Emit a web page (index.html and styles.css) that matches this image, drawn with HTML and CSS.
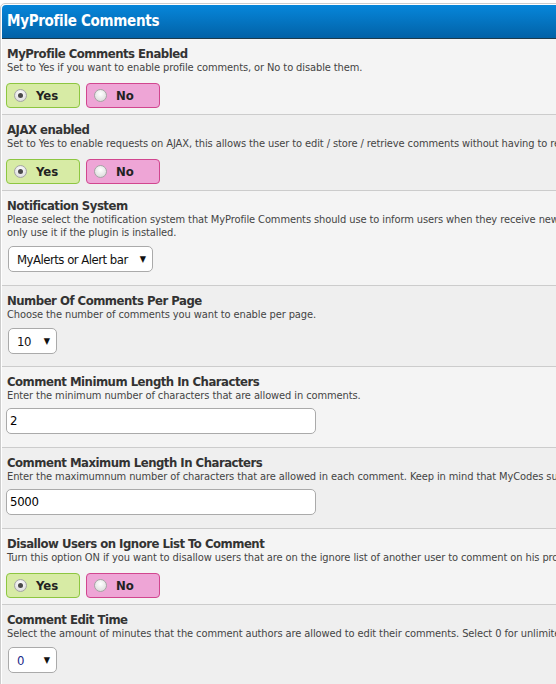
FILE: index.html
```html
<!DOCTYPE html>
<html>
<head>
<meta charset="utf-8">
<link rel="stylesheet" href="styles.css">
</head>
<body>
<div class="wrapper">
  <div class="title">MyProfile Comments</div>

  <div class="row alt1">
    <div class="label">MyProfile Comments Enabled</div>
    <div class="desc">Set to Yes if you want to enable profile comments, or No to disable them.</div>
    <div class="yesno">
      <span class="opt yes"><span class="radio checked"></span>Yes</span>
      <span class="opt no"><span class="radio"></span>No</span>
    </div>
  </div>

  <div class="row alt2">
    <div class="label">AJAX enabled</div>
    <div class="desc">Set to Yes to enable requests on AJAX, this allows the user to edit / store / retrieve comments without having to reload the page.</div>
    <div class="yesno">
      <span class="opt yes"><span class="radio checked"></span>Yes</span>
      <span class="opt no"><span class="radio"></span>No</span>
    </div>
  </div>

  <div class="row alt1 tall">
    <div class="label">Notification System</div>
    <div class="desc">Please select the notification system that MyProfile Comments should use to inform users when they receive new comments. MyAlerts<br>only use it if the plugin is installed.</div>
    <div class="select wide"><span class="val">MyAlerts or Alert bar</span><span class="arrow">▼</span></div>
  </div>

  <div class="row alt2">
    <div class="label">Number Of Comments Per Page</div>
    <div class="desc">Choose the number of comments you want to enable per page.</div>
    <div class="select small"><span class="val">10</span><span class="arrow">▼</span></div>
  </div>

  <div class="row alt1">
    <div class="label">Comment Minimum Length In Characters</div>
    <div class="desc">Enter the minimum number of characters that are allowed in comments.</div>
    <div class="input">2</div>
  </div>

  <div class="row alt2">
    <div class="label">Comment Maximum Length In Characters</div>
    <div class="desc">Enter the maximumnum number of characters that are allowed in each comment. Keep in mind that MyCodes such as [b] count as characters.</div>
    <div class="input">5000</div>
  </div>

  <div class="row alt1">
    <div class="label">Disallow Users on Ignore List To Comment</div>
    <div class="desc">Turn this option ON if you want to disallow users that are on the ignore list of another user to comment on his profile.</div>
    <div class="yesno">
      <span class="opt yes"><span class="radio checked"></span>Yes</span>
      <span class="opt no"><span class="radio"></span>No</span>
    </div>
  </div>

  <div class="row alt2 last">
    <div class="label">Comment Edit Time</div>
    <div class="desc">Select the amount of minutes that the comment authors are allowed to edit their comments. Select 0 for unlimited time.</div>
    <div class="select small"><span class="val blue">0</span><span class="arrow">▼</span></div>
  </div>
</div>
</body>
</html>
```
FILE: styles.css
```css
html, body {
  margin: 0;
  padding: 0;
  overflow: hidden;
  background: #fff;
}
body {
  padding-top: 3px;
  font-family: "DejaVu Sans Condensed", "DejaVu Sans", sans-serif;
  font-stretch: condensed;
  color: #333;
}
.wrapper {
  width: 760px;
  border: 1px solid #ccc;
  border-radius: 5px;
  padding: 1px;
}
.title {
  height: 33px;
  line-height: 33px;
  padding-left: 5px;
  background: linear-gradient(#0686da, #0262a7);
  border-bottom: 1px solid #1e3b4c;
  border-radius: 4px 4px 0 0;
  color: #fff;
  font-size: 15px;
  font-weight: bold;
  letter-spacing: -0.3px;
}
.row {
  padding: 7px 5px 6px;
  border-bottom: 1px solid #ccc;
  white-space: nowrap;
  overflow: hidden;
}
.alt1 { background: #f4f4f4; }
.alt2 { background: #efefef; }
.row.last { border-bottom: none; height: 90px; }
.label {
  font-size: 13px;
  font-weight: bold;
  line-height: 15px;
  color: #333;
  letter-spacing: -0.5px;
}
.desc {
  font-size: 11px;
  line-height: 13px;
  color: #444;
  letter-spacing: -0.1px;
}
.yesno {
  display: flex;
  gap: 6px;
  margin-top: 9px;
  margin-left: -1px;
}
.opt {
  box-sizing: border-box;
  width: 74px;
  height: 25px;
  border: 1px solid;
  border-radius: 4px;
  display: flex;
  align-items: center;
  padding-left: 7px;
  font-size: 13px;
  font-weight: bold;
  color: #222;
}
.opt.yes { background: #d7eba5; border-color: #8dc641; }
.opt.no { background: #eea5d6; border-color: #d1468f; }
.radio {
  box-sizing: border-box;
  width: 13px;
  height: 13px;
  border-radius: 50%;
  border: 1px solid #a5a5a5;
  background: radial-gradient(circle at 50% 35%, #fff 0%, #e6e6e6 60%, #cfcfcf 100%);
  margin-right: 9px;
  display: flex;
  align-items: center;
  justify-content: center;
}
.radio.checked::after {
  content: "";
  width: 5px;
  height: 5px;
  border-radius: 50%;
  background: #4a4a4a;
}
.select {
  box-sizing: border-box;
  display: flex;
  align-items: center;
  justify-content: space-between;
  height: 26px;
  margin: 7px 0 6px 1px;
  background: #fff;
  border: 1px solid #aaa;
  border-radius: 5px;
  padding: 0 6px 0 8px;
  font-size: 13px;
  color: #111;
}
.row.tall .select { margin-bottom: 7px; }
.select .val { letter-spacing: -0.5px; }
.select.wide { width: 145px; }
.select.small { width: 49px; }
.select .blue { color: #1a2a8a; }
.arrow {
  font-size: 9px;
  color: #111;
}
.input {
  box-sizing: border-box;
  width: 310px;
  height: 26px;
  line-height: 24px;
  margin: 6px 0 7px -1px;
  background: #fff;
  border: 1px solid #aaa;
  border-radius: 5px;
  padding-left: 3px;
  font-size: 13px;
  color: #000;
  letter-spacing: -0.3px;
}
```
